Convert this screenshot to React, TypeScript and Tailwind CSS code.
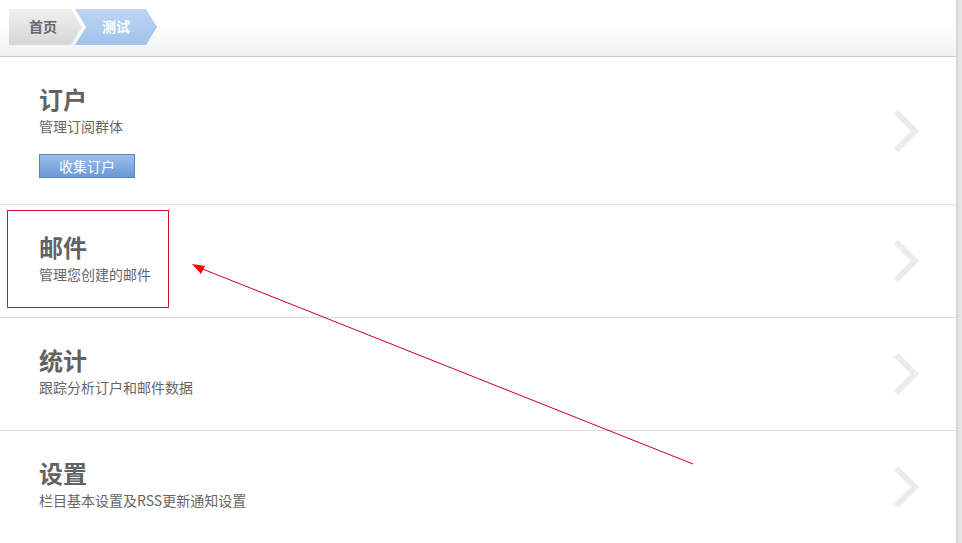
import React from "react";

const font = { fontFamily: '"Noto Sans CJK SC", "Noto Sans", sans-serif' };

function Chevron() {
  return (
    <svg width="26" height="44" viewBox="0 0 26 44" className="shrink-0">
      <path d="M3 3 L22 22 L3 41" fill="none" stroke="#ebebeb" strokeWidth="6" strokeLinejoin="miter" />
    </svg>
  );
}

function Section({
  title,
  sub,
  h,
  children,
  last,
}: {
  title: string;
  sub: string;
  h: string;
  children?: React.ReactNode;
  last?: boolean;
}) {
  return (
    <div className={`flex items-center justify-between pl-[39px] pr-[37px] ${h} ${last ? "" : "border-b border-[#dddddd]"}`}>
      <div className="flex flex-col self-start pt-[30px]">
        <div className="text-[24px] leading-[24px] font-bold text-[#626262]">{title}</div>
        <div className="mt-[6px] text-[14px] leading-[18px] text-[#666666]">{sub}</div>
        {children}
      </div>
      <Chevron />
    </div>
  );
}

export default function App() {
  return (
    <div className="relative flex h-[543px] w-[962px] overflow-hidden bg-white" style={font}>
      <div className="flex w-[956px] flex-col">
        <div className="flex h-[57px] items-start border-b border-[#cccccc] bg-gradient-to-b from-white from-40% to-[#f1f1f1] pl-[9px] pt-[9px]">
          <div
            className="flex h-[36px] w-[73px] items-center bg-gradient-to-b from-[#f0f0f0] to-[#d6d6d6] pb-[2px] pl-[20px] text-[14px] font-bold text-[#666666]"
            style={{ clipPath: "polygon(0 0, 62px 0, 73px 18px, 62px 36px, 0 36px)" }}
          >
            首页
          </div>
          <div
            className="-ml-[7px] flex h-[36px] w-[82px] items-center bg-gradient-to-b from-[#bcd6f3] to-[#9fc3eb] pb-[2px] pl-[27px] text-[14px] font-bold text-white"
            style={{ clipPath: "polygon(0 0, 71px 0, 82px 18px, 71px 36px, 0 36px, 11px 18px)" }}
          >
            测试
          </div>
        </div>
        <Section title="订户" sub="管理订阅群体" h="h-[148px]">
          <div className="mt-[19px] flex h-[24px] w-[96px] items-center justify-center border border-[#5d84bc] bg-gradient-to-b from-[#9cc0ec] to-[#6b97d3] text-[14px] leading-none text-white">
            收集订户
          </div>
        </Section>
        <Section title="邮件" sub="管理您创建的邮件" h="h-[113px]" />
        <Section title="统计" sub="跟踪分析订户和邮件数据" h="h-[113px]" />
        <Section title="设置" sub="栏目基本设置及RSS更新通知设置" h="h-[112px]" last />
      </div>
      <div className="w-[6px] border-l-2 border-[#d6d6d6] bg-[#e6e6e6]" />

      <div className="absolute left-[7px] top-[210px] h-[98px] w-[162px] border border-[#d0142a]" />
      <svg className="pointer-events-none absolute left-0 top-0" width="962" height="543">
        <line x1="693" y1="464" x2="200" y2="268" stroke="#c8001e" strokeWidth="1" />
        <polygon points="192,264 205,266 201,274" fill="#ff0000" />
      </svg>
    </div>
  );
}
